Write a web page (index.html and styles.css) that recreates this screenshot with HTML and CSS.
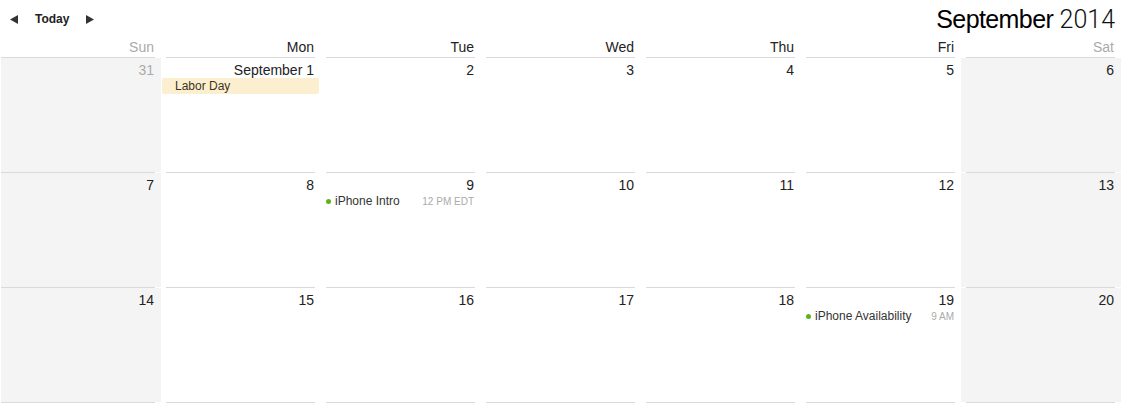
FILE: index.html
```html
<!DOCTYPE html>
<html lang="en">
  <head>
    <meta charset="UTF-8" />
    <meta name="viewport" content="width=device-width, initial-scale=1.0" />
    <title>Calendar</title>

    <link rel="stylesheet" href="styles.css">
  </head>
  <body>
    <!-- Toolbar -->
    <header class="toolbar">
      <nav class="nav">
        <button class="arrow" aria-label="Previous">
          <svg width="8" height="9" viewBox="0 0 8 9"><path d="M8 0 L0 4.5 L8 9 Z" fill="#333"/></svg>
        </button>
        <button class="today">Today</button>
        <button class="arrow" aria-label="Next">
          <svg width="8" height="9" viewBox="0 0 8 9"><path d="M0 0 L8 4.5 L0 9 Z" fill="#333"/></svg>
        </button>
      </nav>
      <h1 class="title"><span class="month">September</span> <span class="year">2014</span></h1>
    </header>

    <!-- Weekday names -->
    <div class="weekdays">
      <div class="weekday weekend">Sun</div>
      <div class="weekday">Mon</div>
      <div class="weekday">Tue</div>
      <div class="weekday">Wed</div>
      <div class="weekday">Thu</div>
      <div class="weekday">Fri</div>
      <div class="weekday weekend">Sat</div>
    </div>

    <!-- Month grid -->
    <div class="month-grid">
      <div class="cell first"><div class="rule"></div><div class="cell-body weekend"><div class="date other">31</div></div></div>
      <div class="cell"><div class="rule"></div><div class="cell-body">
        <div class="date">September 1</div>
        <div class="allday">Labor Day</div>
      </div></div>
      <div class="cell"><div class="rule"></div><div class="cell-body"><div class="date">2</div></div></div>
      <div class="cell"><div class="rule"></div><div class="cell-body"><div class="date">3</div></div></div>
      <div class="cell"><div class="rule"></div><div class="cell-body"><div class="date">4</div></div></div>
      <div class="cell"><div class="rule"></div><div class="cell-body"><div class="date">5</div></div></div>
      <div class="cell"><div class="rule"></div><div class="cell-body weekend"><div class="date">6</div></div></div>

      <div class="cell first"><div class="rule"></div><div class="cell-body weekend"><div class="date">7</div></div></div>
      <div class="cell"><div class="rule"></div><div class="cell-body"><div class="date">8</div></div></div>
      <div class="cell"><div class="rule"></div><div class="cell-body">
        <div class="date">9</div>
        <div class="event"><span class="dot"></span><span class="event-name">iPhone Intro</span><span class="event-time">12 PM EDT</span></div>
      </div></div>
      <div class="cell"><div class="rule"></div><div class="cell-body"><div class="date">10</div></div></div>
      <div class="cell"><div class="rule"></div><div class="cell-body"><div class="date">11</div></div></div>
      <div class="cell"><div class="rule"></div><div class="cell-body"><div class="date">12</div></div></div>
      <div class="cell"><div class="rule"></div><div class="cell-body weekend"><div class="date">13</div></div></div>

      <div class="cell first"><div class="rule"></div><div class="cell-body weekend"><div class="date">14</div></div></div>
      <div class="cell"><div class="rule"></div><div class="cell-body"><div class="date">15</div></div></div>
      <div class="cell"><div class="rule"></div><div class="cell-body"><div class="date">16</div></div></div>
      <div class="cell"><div class="rule"></div><div class="cell-body"><div class="date">17</div></div></div>
      <div class="cell"><div class="rule"></div><div class="cell-body"><div class="date">18</div></div></div>
      <div class="cell"><div class="rule"></div><div class="cell-body">
        <div class="date">19</div>
        <div class="event"><span class="dot"></span><span class="event-name">iPhone Availability</span><span class="event-time">9 AM</span></div>
      </div></div>
      <div class="cell"><div class="rule"></div><div class="cell-body weekend"><div class="date">20</div></div></div>
    </div>

    <!-- Top rule of the next week, cut by the window edge -->
    <div class="next-week">
      <div class="rule first"></div>
      <div class="rule"></div>
      <div class="rule"></div>
      <div class="rule"></div>
      <div class="rule"></div>
      <div class="rule"></div>
      <div class="rule"></div>
    </div>
  </body>
</html>
```

FILE: styles.css
```css
/* Base */
html,
body {
  margin: 0;
  height: 100%;
  overflow: hidden;
  background: #fff;
}

body {
  font-family: "Liberation Sans", Arial, sans-serif;
  color: #222;
}

/* Toolbar with the navigation and the month title */
.toolbar {
  display: flex;
  justify-content: space-between;
  align-items: flex-start;
  height: 38px;
  padding: 0 9px 0 10px;
}

.nav {
  display: flex;
  align-items: center;
  height: 38px;
}

.nav button {
  border: 0;
  background: none;
  padding: 0;
  cursor: pointer;
  font-family: inherit;
}

.arrow {
  display: flex;
  width: 8px;
  height: 9px;
}

.today {
  margin: 0 17px 0 17px;
  font-size: 12px;
  font-weight: bold;
  color: #222;
}

.title {
  margin: 4px 0 0;
  font-family: "Liberation Sans", Arial, sans-serif;
  font-size: 25px;
  line-height: 30px;
  font-weight: normal;
  letter-spacing: -0.6px;
  color: #000;
}

.title .year {
  font-family: Roboto, "Liberation Sans", sans-serif;
  font-weight: 300;
  letter-spacing: 0;
  color: #111;
}

/* Weekday header row */
.weekdays {
  display: grid;
  grid-template-columns: repeat(7, 160px);
  margin-left: 1px;
  height: 19px;
}

.weekday {
  text-align: right;
  padding-right: 7px;
  font-size: 14px;
  line-height: 18px;
  color: #222;
}

.weekday.weekend {
  color: #aaa;
}

/* Month grid */
.month-grid {
  display: grid;
  grid-template-columns: repeat(7, 160px);
  grid-auto-rows: 115px;
  margin-left: 1px;
}

.cell {
  display: flex;
  flex-direction: column;
}

.rule {
  height: 1px;
  margin: 0 6px 0 5px;
  background: #dadada;
}

.cell.first .rule,
.rule.first {
  margin-left: 0;
}

.next-week {
  display: grid;
  grid-template-columns: repeat(7, 160px);
  margin-left: 1px;
}

.cell-body {
  flex: 1;
  padding-top: 4px;
}

.cell-body.weekend {
  background: #f4f4f4;
}

.date {
  text-align: right;
  padding-right: 7px;
  font-size: 14px;
  line-height: 16px;
  color: #222;
}

.date.other {
  color: #aaa;
}

/* All-day event bar */
.allday {
  margin: 0 2px 0 1px;
  padding-left: 13px;
  height: 16px;
  line-height: 16px;
  font-size: 12px;
  color: #3b3425;
  background: #fcefcf;
  border-radius: 2px;
}

/* Timed events */
.event {
  display: flex;
  align-items: center;
  height: 16px;
  padding: 0 7px 0 5px;
  font-size: 12px;
  color: #333;
}

.dot {
  width: 5px;
  height: 5px;
  border-radius: 50%;
  background: #5cb516;
  margin-right: 4px;
  flex: none;
}

.event-name {
  flex: 1;
  white-space: nowrap;
}

.event-time {
  font-size: 10px;
  color: #aaa;
}
```
